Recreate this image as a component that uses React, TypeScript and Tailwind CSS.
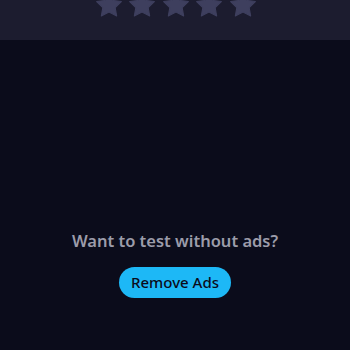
import React from "react";

function Star() {
  return (
    <svg width="26" height="25" viewBox="0 0 24 23" className="shrink-0">
      <path
        d="M12 0.6l3.5 7.1 7.9 1.1-5.7 5.5 1.4 7.8L12 18.4l-7.1 3.7 1.4-7.8L0.6 8.8l7.9-1.1z"
        fill="#3e3f5e"
        stroke="#3e3f5e"
        strokeWidth="1"
        strokeLinejoin="round"
      />
    </svg>
  );
}

export default function App() {
  return (
    <div
      className="w-[350px] h-[350px] bg-[#0b0c1b] flex flex-col overflow-hidden"
      style={{ fontFamily: '"Noto Sans", "Open Sans", sans-serif' }}
    >
      <div className="h-[40px] bg-[#1c1c2f] overflow-hidden flex justify-center">
        <div className="flex gap-[7.5px] -mt-[8px] h-[25px] pl-[1px]">
          <Star />
          <Star />
          <Star />
          <Star />
          <Star />
        </div>
      </div>
      <div className="flex flex-col items-center pt-[189px]">
        <div className="text-[16.5px] leading-[24px] font-semibold text-[#9c9caa]">
          Want to test without ads?
        </div>
        <button className="mt-[14px] w-[112px] h-[31px] rounded-full bg-[#1db8f6] text-[#0b0c1b] text-[15px] font-medium flex items-center justify-center">
          Remove Ads
        </button>
      </div>
    </div>
  );
}
